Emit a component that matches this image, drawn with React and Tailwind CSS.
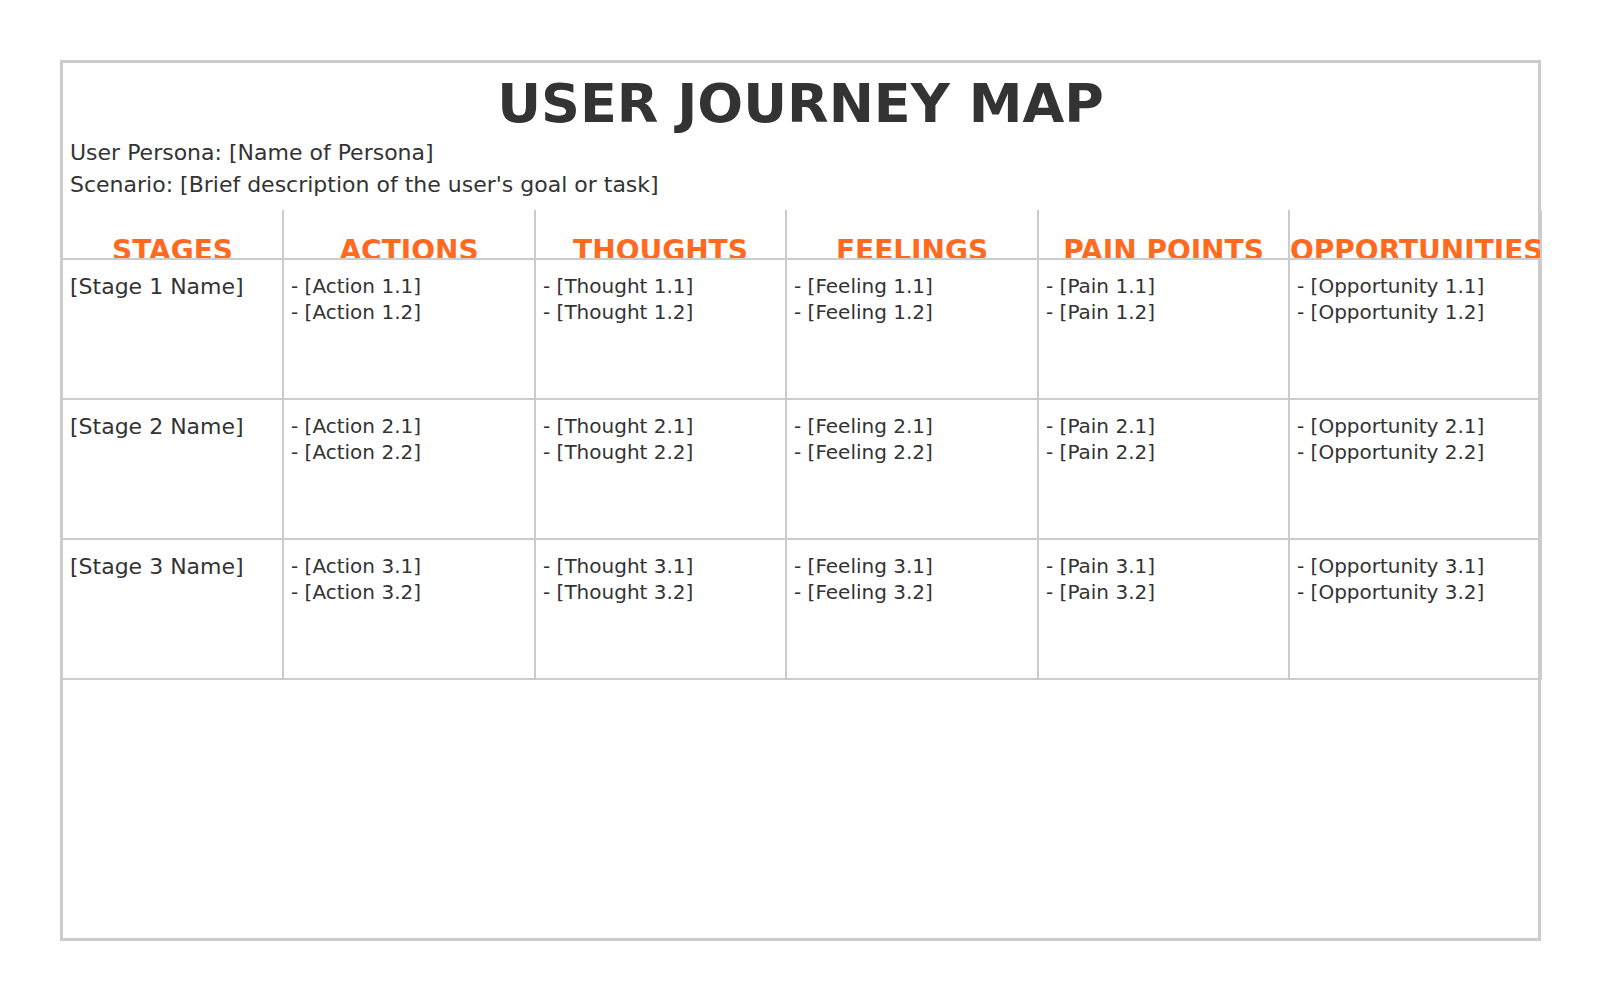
export default function App() {
  const rows = [1, 2, 3];
  const cols = [
    { key: "Action", label: "ACTIONS", w: "w-[252px]" },
    { key: "Thought", label: "THOUGHTS", w: "w-[251px]" },
    { key: "Feeling", label: "FEELINGS", w: "w-[252px]" },
    { key: "Pain", label: "PAIN POINTS", w: "w-[251px]" },
    { key: "Opportunity", label: "OPPORTUNITIES", w: "w-[254px]" },
  ];
  return (
    <div
      className="w-[1600px] h-[1000px] bg-white pt-[60px] pl-[60px] text-[#333]"
      style={{ fontFamily: '"DejaVu Sans", sans-serif' }}
    >
      <div className="w-[1481px] h-[881px] border-[3px] border-[#ccc] flex flex-col">
        <h1 className="text-center font-bold text-[54px] leading-[63px] mt-[9px]">
          USER JOURNEY MAP
        </h1>
        <div className="px-[7px] text-[22px] leading-[32px] mt-[2px]">
          <p>User Persona: [Name of Persona]</p>
          <p>Scenario: [Brief description of the user's goal or task]</p>
        </div>
        <div className="mt-[9px] flex flex-col">
          <div className="flex">
            <div className="w-[219px] shrink-0 h-[50px] overflow-hidden border-b-2 border-[#ccc] text-center text-[#ff6a1f] font-bold text-[28px] leading-[28px] pt-[27px] whitespace-nowrap">
              STAGES
            </div>
            {cols.map((c, i) => (
              <div
                key={c.key}
                className={
                  c.w +
                  " shrink-0 h-[50px] overflow-hidden border-l-2 border-b-2 border-[#ccc] text-center text-[#ff6a1f] font-bold text-[28px] leading-[28px] pt-[27px] whitespace-nowrap " +
                  (i === 4 ? "border-r-2" : "")
                }
              >
                {c.label}
              </div>
            ))}
          </div>
          {rows.map((r) => (
            <Row key={r} r={r} cols={cols} />
          ))}
        </div>
      </div>
    </div>
  );
}

function Row({ r, cols }) {
  const h = r === 1 ? "h-[140px]" : "h-[140px]";
  return (
    <div className="flex">
      <div
        className={
          h +
          " w-[219px] shrink-0 border-b-2 border-[#ccc] pl-[7px] pt-[14px] text-[22px] leading-[26px] whitespace-nowrap"
        }
      >
        [Stage {r} Name]
      </div>
      {cols.map((c, i) => (
        <div
          key={c.key}
          className={
            h +
            " " +
            c.w +
            " shrink-0 border-l-2 border-b-2 border-[#ccc] pl-[7px] pt-[13px] text-[20px] leading-[26px] whitespace-nowrap " +
            (i === 4 ? "border-r-2" : "")
          }
        >
          <div>- [{c.key} {r}.1]</div>
          <div>- [{c.key} {r}.2]</div>
        </div>
      ))}
    </div>
  );
}
